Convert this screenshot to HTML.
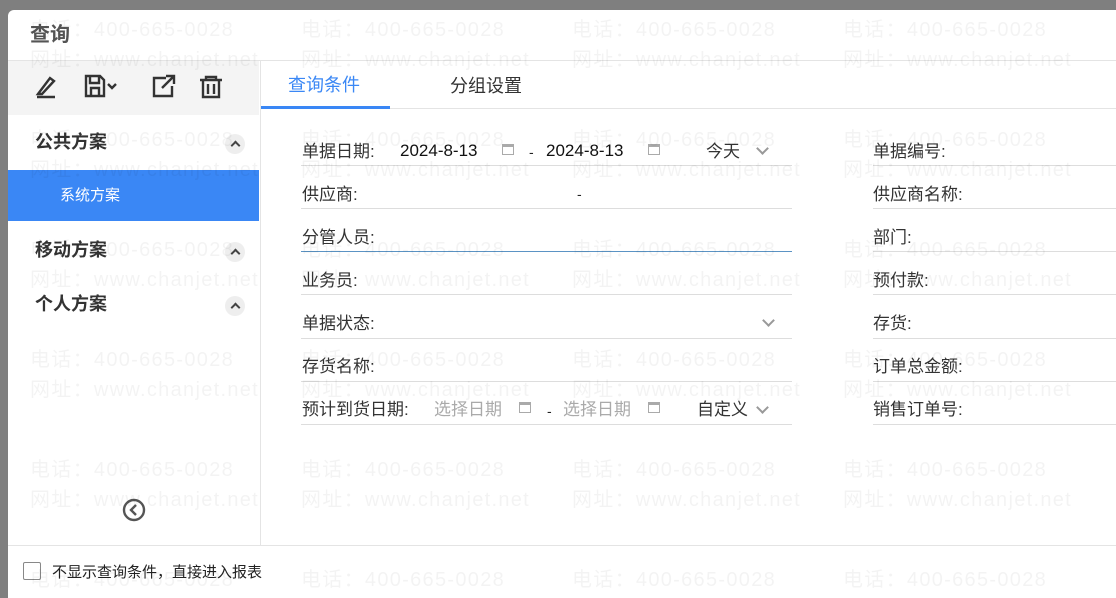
<!DOCTYPE html>
<html><head><meta charset="utf-8"><style>
*{margin:0;padding:0;box-sizing:border-box}
html,body{width:1116px;height:598px;overflow:hidden}
body{background:#7f7f7f;font-family:"Liberation Sans","Noto Sans CJK SC",sans-serif;color:#222;position:relative}
.dlg{position:absolute;left:8px;top:10px;width:1108px;height:588px;background:#fff;border-radius:6px 0 0 0;overflow:hidden}
.abs{position:absolute;line-height:20px}
.title{left:22px;top:15px;font-size:20px;font-weight:bold;color:#555}
.hline{height:1px;background:#e4e4e4}
.tb{left:0;top:51px;width:251px;height:54px;background:#f4f4f4}
.grp{font-size:18px;font-weight:bold;color:#333}
.caret{width:20px;height:20px;border-radius:50%;background:#eee}
.caret:after{content:"";position:absolute;left:7px;top:8px;width:5px;height:5px;border-left:2px solid #444;border-top:2px solid #444;transform:rotate(45deg)}
.lbl{font-size:17px;color:#333}
.row{position:absolute;height:1px;background:#ddd}
.wm{position:absolute;font-size:20px;color:#000;opacity:.045;letter-spacing:1.3px;white-space:nowrap;line-height:30px;z-index:5;pointer-events:none}
.chev{width:9px;height:9px;border-right:2px solid #999;border-bottom:2px solid #999;transform:rotate(45deg)}
.cal{width:12px;height:11px;border:1px solid #aaa;border-top-width:3px}
</style></head><body>
<div class="dlg">
<div class="abs title">查询</div>
<div class="abs hline" style="left:0;top:50px;width:1120px"></div>
<div class="abs tb"></div>
<svg class="abs" style="left:26px;top:62px" width="210" height="28" viewBox="0 0 210 28" fill="none" stroke="#333" stroke-width="2.4">
<path d="M4 22 L16 6 L20 9 L8 22 Z M3 25 H21"/>
<path d="M52 4 H66 L70 8 V24 H52 Z M56 4 V11 H65 V4 M57 24 V16 H65 V24"/>
<path d="M74 12 L78 16 L82 12"/>
<path d="M132 6 H120 V24 H138 V14 M128 16 L139 5 M132 4 H140 V12"/>
<path d="M166 8 H188 M172 8 V5 H182 V8 M169 8 V25 H185 V8 M174 12 V22 M180 12 V22"/>
</svg>
<div class="abs" style="left:252px;top:50px;width:1px;height:486px;background:#e4e4e4"></div>
<div class="abs grp" style="left:27px;top:122px">公共方案</div>
<div class="abs caret" style="left:217px;top:124px"></div>
<div class="abs" style="left:0;top:160px;width:251px;height:51px;background:#3a87f5;color:#fff;font-size:15px;padding:16px 0 0 52px">系统方案</div>
<div class="abs grp" style="left:27px;top:230px">移动方案</div>
<div class="abs caret" style="left:217px;top:232px"></div>
<div class="abs grp" style="left:27px;top:284px">个人方案</div>
<div class="abs caret" style="left:217px;top:286px"></div>
<svg class="abs" style="left:114px;top:488px" width="24" height="24" viewBox="0 0 24 24" fill="none" stroke="#555" stroke-width="2.4"><circle cx="12" cy="12" r="10"/><path d="M14 7 L9 12 L14 17"/></svg>
<div class="abs lbl" style="left:280px;top:65px;color:#3a87f5;font-size:18px">查询条件</div>
<div class="abs lbl" style="left:442px;top:66px;font-size:18px">分组设置</div>
<div class="abs hline" style="left:253px;top:98px;width:870px"></div>
<div class="abs" style="left:253px;top:96px;width:129px;height:3px;background:#3a87f5"></div>
<div class="abs hline" style="left:0;top:535px;width:1120px"></div>
<div class="abs" style="left:15px;top:552px;width:18px;height:18px;border:1px solid #888;border-radius:2px"></div>
<div class="abs" style="left:44px;top:553px;font-size:15px">不显示查询条件，直接进入报表</div>
<!-- form -->
<div class="abs lbl" style="left:294px;top:132px">单据日期:</div>
<div class="abs" style="left:392px;top:131px;font-size:17px;color:#111">2024-8-13</div>
<div class="abs cal" style="left:494px;top:134px"></div>
<div class="abs" style="left:521px;top:132px;font-size:14px">-</div>
<div class="abs" style="left:538px;top:131px;font-size:17px;color:#111">2024-8-13</div>
<div class="abs cal" style="left:640px;top:134px"></div>
<div class="abs lbl" style="left:698px;top:132px">今天</div>
<div class="abs chev" style="left:750px;top:134px"></div>
<div class="row" style="left:293px;top:155px;width:491px"></div>
<div class="abs lbl" style="left:294px;top:175px">供应商:</div>
<div class="abs" style="left:569px;top:174px;font-size:14px">-</div>
<div class="row" style="left:293px;top:198px;width:491px"></div>
<div class="abs lbl" style="left:294px;top:218px">分管人员:</div>
<div class="row" style="left:293px;top:241px;width:491px;background:#5b93c4"></div>
<div class="abs lbl" style="left:294px;top:261px">业务员:</div>
<div class="row" style="left:293px;top:284px;width:491px"></div>
<div class="abs lbl" style="left:294px;top:304px">单据状态:</div>
<div class="abs chev" style="left:756px;top:306px"></div>
<div class="row" style="left:293px;top:328px;width:491px"></div>
<div class="abs lbl" style="left:294px;top:347px">存货名称:</div>
<div class="row" style="left:293px;top:371px;width:491px"></div>
<div class="abs lbl" style="left:294px;top:390px">预计到货日期:</div>
<div class="abs" style="left:426px;top:390px;font-size:17px;color:#aaa">选择日期</div>
<div class="abs cal" style="left:511px;top:392px"></div>
<div class="abs" style="left:539px;top:391px;font-size:14px">-</div>
<div class="abs" style="left:555px;top:390px;font-size:17px;color:#aaa">选择日期</div>
<div class="abs cal" style="left:640px;top:392px"></div>
<div class="abs lbl" style="left:689px;top:390px">自定义</div>
<div class="abs chev" style="left:750px;top:393px"></div>
<div class="row" style="left:293px;top:414px;width:491px"></div>
<div class="abs lbl" style="left:865px;top:132px">单据编号:</div>
<div class="row" style="left:865px;top:155px;width:260px"></div>
<div class="abs lbl" style="left:865px;top:175px">供应商名称:</div>
<div class="row" style="left:865px;top:198px;width:260px"></div>
<div class="abs lbl" style="left:865px;top:218px">部门:</div>
<div class="row" style="left:865px;top:241px;width:260px"></div>
<div class="abs lbl" style="left:865px;top:261px">预付款:</div>
<div class="row" style="left:865px;top:284px;width:260px"></div>
<div class="abs lbl" style="left:865px;top:304px">存货:</div>
<div class="row" style="left:865px;top:328px;width:260px"></div>
<div class="abs lbl" style="left:865px;top:347px">订单总金额:</div>
<div class="row" style="left:865px;top:371px;width:260px"></div>
<div class="abs lbl" style="left:865px;top:390px">销售订单号:</div>
<div class="row" style="left:865px;top:414px;width:260px"></div>
</div>
<div class="wm" style="left:30px;top:15px">电话：400-665-0028<br>网址：www.chanjet.net</div>
<div class="wm" style="left:301px;top:15px">电话：400-665-0028<br>网址：www.chanjet.net</div>
<div class="wm" style="left:572px;top:15px">电话：400-665-0028<br>网址：www.chanjet.net</div>
<div class="wm" style="left:843px;top:15px">电话：400-665-0028<br>网址：www.chanjet.net</div>
<div class="wm" style="left:30px;top:125px">电话：400-665-0028<br>网址：www.chanjet.net</div>
<div class="wm" style="left:301px;top:125px">电话：400-665-0028<br>网址：www.chanjet.net</div>
<div class="wm" style="left:572px;top:125px">电话：400-665-0028<br>网址：www.chanjet.net</div>
<div class="wm" style="left:843px;top:125px">电话：400-665-0028<br>网址：www.chanjet.net</div>
<div class="wm" style="left:30px;top:235px">电话：400-665-0028<br>网址：www.chanjet.net</div>
<div class="wm" style="left:301px;top:235px">电话：400-665-0028<br>网址：www.chanjet.net</div>
<div class="wm" style="left:572px;top:235px">电话：400-665-0028<br>网址：www.chanjet.net</div>
<div class="wm" style="left:843px;top:235px">电话：400-665-0028<br>网址：www.chanjet.net</div>
<div class="wm" style="left:30px;top:345px">电话：400-665-0028<br>网址：www.chanjet.net</div>
<div class="wm" style="left:301px;top:345px">电话：400-665-0028<br>网址：www.chanjet.net</div>
<div class="wm" style="left:572px;top:345px">电话：400-665-0028<br>网址：www.chanjet.net</div>
<div class="wm" style="left:843px;top:345px">电话：400-665-0028<br>网址：www.chanjet.net</div>
<div class="wm" style="left:30px;top:455px">电话：400-665-0028<br>网址：www.chanjet.net</div>
<div class="wm" style="left:301px;top:455px">电话：400-665-0028<br>网址：www.chanjet.net</div>
<div class="wm" style="left:572px;top:455px">电话：400-665-0028<br>网址：www.chanjet.net</div>
<div class="wm" style="left:843px;top:455px">电话：400-665-0028<br>网址：www.chanjet.net</div>
<div class="wm" style="left:30px;top:565px">电话：400-665-0028</div>
<div class="wm" style="left:301px;top:565px">电话：400-665-0028</div>
<div class="wm" style="left:572px;top:565px">电话：400-665-0028</div>
<div class="wm" style="left:843px;top:565px">电话：400-665-0028</div>
</body></html>
